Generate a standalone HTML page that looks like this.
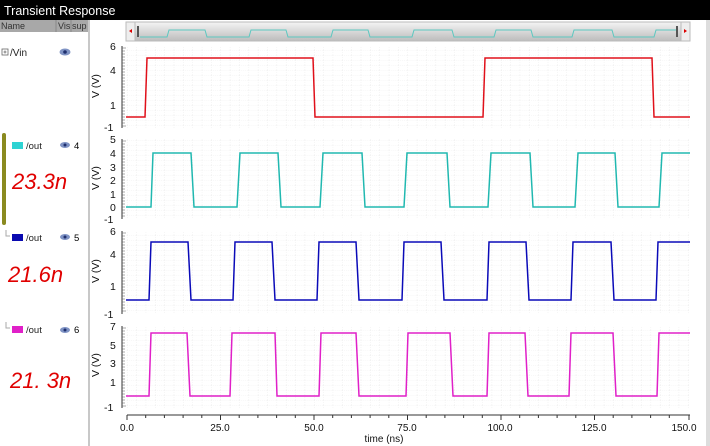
<!DOCTYPE html>
<html><head><style>
html,body{margin:0;padding:0;width:710px;height:446px;overflow:hidden;background:#fff}
svg{display:block}
text{font-family:"Liberation Sans",sans-serif}
</style></head><body>
<svg width="710" height="446" viewBox="0 0 710 446" xmlns="http://www.w3.org/2000/svg">
<defs>
<pattern id="g" width="9.35" height="5" patternUnits="userSpaceOnUse" x="127" y="0">
<path d="M0 0V5M0 0H9.35" stroke="#e2e2e2" stroke-width="0.6" stroke-dasharray="1 1" fill="none"/>
</pattern>
<linearGradient id="sb" x1="0" y1="0" x2="0" y2="1"><stop offset="0" stop-color="#f4f4f4"/><stop offset="0.5" stop-color="#d8d8d8"/><stop offset="1" stop-color="#bcbcbc"/></linearGradient>
</defs>
<rect width="710" height="446" fill="#fff"/>
<rect width="710" height="20" fill="#000"/>
<text x="4" y="15" fill="#fff" font-size="12.5">Transient Response</text>
<rect x="0" y="20" width="88" height="12" fill="#a8a8a8"/>
<text x="1" y="29" font-size="9" fill="#333">Name</text>
<line x1="56" y1="20" x2="56" y2="32" stroke="#888"/>
<text x="58" y="29" font-size="9" fill="#333">Vis</text>
<line x1="71" y1="20" x2="71" y2="32" stroke="#888"/>
<text x="72" y="29" font-size="9" fill="#333">sup</text>
<rect x="88" y="20" width="2" height="426" fill="#c8c8c8"/>
<rect x="706" y="20" width="4" height="426" fill="#ddd"/>
<rect x="2" y="49" width="6" height="6" fill="none" stroke="#666" stroke-width="0.8"/><path d="M3.5 52H6.5M5 50.5V53.5" stroke="#666" stroke-width="0.8"/>
<text x="10" y="56" font-size="10" fill="#222">/Vin</text>
<ellipse cx="65" cy="52" rx="5.5" ry="3.5" fill="#7f93c4"/><circle cx="65" cy="52" r="1.8" fill="#1e2f6e"/>
<rect x="2" y="133" width="4" height="92" rx="2" fill="#8a8a20"/>
<rect x="12" y="142" width="11" height="7" fill="#2ed3d3"/><text x="26" y="149" font-size="9.5" fill="#222">/out</text>
<ellipse cx="65" cy="145" rx="5" ry="3" fill="#7f93c4"/><circle cx="65" cy="145" r="1.5" fill="#1e2f6e"/><text x="74" y="149" font-size="9.5">4</text>
<path d="M6 230V236H10" stroke="#aaa" fill="none"/>
<rect x="12" y="234" width="11" height="7" fill="#0a0ab0"/><text x="26" y="241" font-size="9.5" fill="#222">/out</text>
<ellipse cx="65" cy="237" rx="5" ry="3" fill="#7f93c4"/><circle cx="65" cy="237" r="1.5" fill="#1e2f6e"/><text x="74" y="241" font-size="9.5">5</text>
<path d="M6 322V328H10" stroke="#aaa" fill="none"/>
<rect x="12" y="326" width="11" height="7" fill="#e020c8"/><text x="26" y="333" font-size="9.5" fill="#222">/out</text>
<ellipse cx="65" cy="330" rx="5" ry="3" fill="#7f93c4"/><circle cx="65" cy="330" r="1.5" fill="#1e2f6e"/><text x="74" y="333" font-size="9.5">6</text>
<text x="12" y="189" font-size="22" fill="#e00000" font-family="Liberation Serif,serif" font-style="italic">23.3n</text>
<text x="8" y="282" font-size="22" fill="#e00000" font-family="Liberation Serif,serif" font-style="italic">21.6n</text>
<text x="10" y="388" font-size="22" fill="#e00000" font-family="Liberation Serif,serif" font-style="italic">21. 3n</text>
<rect x="126" y="22" width="564" height="19" fill="url(#sb)" stroke="#bbb"/>
<rect x="126" y="22" width="9" height="19" fill="#eee" stroke="#bbb"/><path d="M132 29l-3 2 3 2z" fill="#d00"/>
<rect x="137" y="26" width="2" height="11" fill="#555"/>
<rect x="676" y="26" width="2" height="11" fill="#555"/>
<rect x="681" y="22" width="9" height="19" fill="#eee" stroke="#bbb"/><path d="M684 29l3 2-3 2z" fill="#d00"/>
<path d="M140 37H167l2-7H205l2 7H249l2-7H286l2 7H331l2-7H368l2 7H412l2-7H452l2 7H494l2-7H531l2 7H572l2-7H612l2 7H654l2-7H676" stroke="#5cc8c0" fill="none"/>
<rect x="126" y="46" width="564" height="82" fill="url(#g)"/>
<rect x="126" y="139" width="564" height="80" fill="url(#g)"/>
<rect x="126" y="231" width="564" height="83" fill="url(#g)"/>
<rect x="126" y="326" width="564" height="82" fill="url(#g)"/>
<g stroke="#333"><line x1="122" y1="46" x2="122" y2="128"/><line x1="122" y1="139" x2="122" y2="219"/><line x1="122" y1="231" x2="122" y2="314"/><line x1="122" y1="326" x2="122" y2="408"/></g>
<g stroke="#555" stroke-width="0.6">
<path d="M122 48h4M122 51h3M122 54h3M122 57h3M122 60h3M122 63h3M122 66h3M122 69h3M122 72h3M122 75h3M122 78h3M122 81h3M122 84h3M122 87h3M122 90h3M122 93h3M122 96h3M122 99h3M122 102h3M122 105h3M122 108h3M122 111h3M122 114h3M122 117h3M122 120h3M122 123h3M122 126h4"/>
<path transform="translate(0,93)" d="M122 48h4M122 51h3M122 54h3M122 57h3M122 60h3M122 63h3M122 66h3M122 69h3M122 72h3M122 75h3M122 78h3M122 81h3M122 84h3M122 87h3M122 90h3M122 93h3M122 96h3M122 99h3M122 102h3M122 105h3M122 108h3M122 111h3M122 114h3M122 117h3M122 120h3M122 123h3"/>
<path transform="translate(0,185)" d="M122 48h4M122 51h3M122 54h3M122 57h3M122 60h3M122 63h3M122 66h3M122 69h3M122 72h3M122 75h3M122 78h3M122 81h3M122 84h3M122 87h3M122 90h3M122 93h3M122 96h3M122 99h3M122 102h3M122 105h3M122 108h3M122 111h3M122 114h3M122 117h3M122 120h3M122 123h3M122 126h4"/>
<path transform="translate(0,280)" d="M122 48h4M122 51h3M122 54h3M122 57h3M122 60h3M122 63h3M122 66h3M122 69h3M122 72h3M122 75h3M122 78h3M122 81h3M122 84h3M122 87h3M122 90h3M122 93h3M122 96h3M122 99h3M122 102h3M122 105h3M122 108h3M122 111h3M122 114h3M122 117h3M122 120h3M122 123h3M122 126h4"/>
</g>
<g font-size="10.5" fill="#111">
<text x="110" y="50">6</text><text x="110" y="74">4</text><text x="110" y="109">1</text><text x="104" y="131">-1</text>
<text x="110" y="143">5</text><text x="110" y="157">4</text><text x="110" y="171">3</text><text x="110" y="184">2</text><text x="110" y="198">1</text><text x="110" y="211">0</text><text x="104" y="223">-1</text>
<text x="110" y="235">6</text><text x="110" y="258">4</text><text x="110" y="290">1</text><text x="104" y="318">-1</text>
<text x="110" y="330">7</text><text x="110" y="349">5</text><text x="110" y="367">3</text><text x="110" y="386">1</text><text x="104" y="411">-1</text>
<text transform="translate(99,98) rotate(-90)">V (V)</text>
<text transform="translate(99,190) rotate(-90)">V (V)</text>
<text transform="translate(99,283) rotate(-90)">V (V)</text>
<text transform="translate(99,377) rotate(-90)">V (V)</text>
</g>
<g font-size="10" fill="#111" text-anchor="middle">
<text x="127" y="431">0.0</text><text x="220" y="431">25.0</text><text x="314" y="431">50.0</text><text x="407" y="431">75.0</text><text x="500" y="431">100.0</text><text x="594" y="431">125.0</text><text x="684" y="431">150.0</text>
<text x="384" y="442">time (ns)</text>
</g>
<line x1="127" y1="415" x2="690" y2="415" stroke="#333"/>
<path stroke="#333" d="M127 415v5M145.7 415v3M164.4 415v3M183.1 415v3M201.8 415v3M220.5 415v5M239.2 415v3M257.9 415v3M276.6 415v3M295.3 415v3M314 415v5M332.7 415v3M351.4 415v3M370.1 415v3M388.8 415v3M407.5 415v5M426.2 415v3M444.9 415v3M463.6 415v3M482.3 415v3M501 415v5M519.7 415v3M538.4 415v3M557.1 415v3M575.8 415v3M594.5 415v5M613.2 415v3M631.9 415v3M650.6 415v3M669.3 415v3M689 415v5"/>
<path d="M126 117H145L147 58H313L315 117H483L485 58H652L654 117H690" stroke="#e0101a" stroke-width="1.5" fill="none"/>
<path d="M126 207H151L153 153H191L194 207H237L240 153H278L281 207H320L323 153H362L365 207H404L407 153H447L450 207H488L491 153H530L533 207H575L578 153H615L618 207H659L662 153H690" stroke="#20b8b0" stroke-width="1.5" fill="none"/>
<path d="M126 300H149L151 242H188L191 300H233L235 242H272L275 300H317L319 242H356L359 300H402L404 242H441L444 300H487L489 242H526L529 300H571L573 242H611L614 300H656L658 242H690" stroke="#0a0ab8" stroke-width="1.5" fill="none"/>
<path d="M126 396H149L151 333H187L190 396H230L232 333H275L277 396H319L321 333H356L359 396H406L408 333H450L453 396H487L489 333H525L528 396H569L571 333H613L616 396H657L659 333H690" stroke="#e020c8" stroke-width="1.5" fill="none"/>
</svg>
</body></html>
